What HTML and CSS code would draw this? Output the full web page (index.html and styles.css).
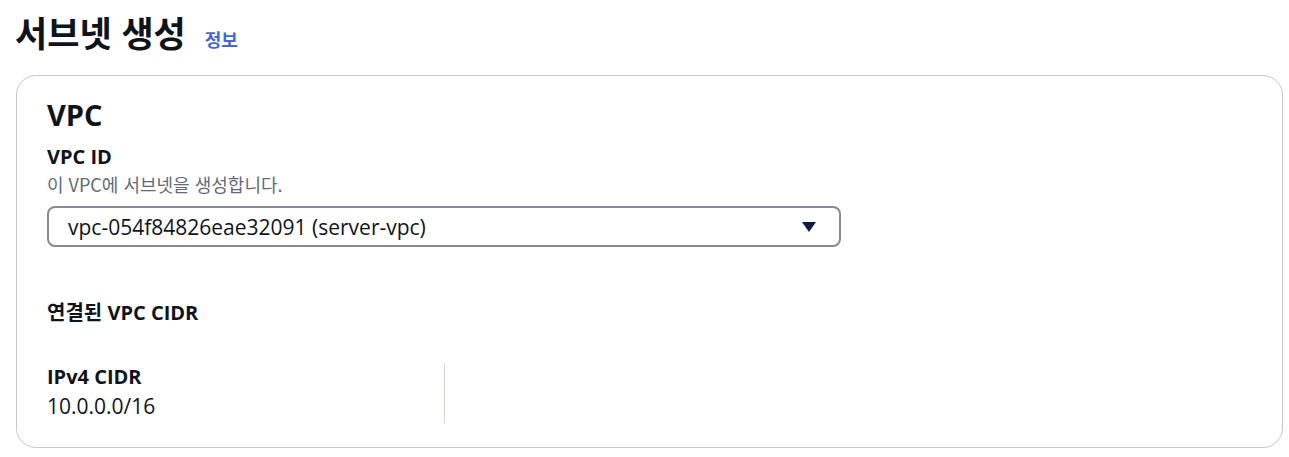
FILE: index.html
```html
<!DOCTYPE html>
<html lang="ko">
<head>
<meta charset="utf-8">
<title>서브넷 생성</title>
<link rel="stylesheet" href="styles.css">
</head>
<body>
<div class="page">
  <header class="page-header">
    <h1 class="page-title">서브넷 생성</h1>
    <a class="info-link" href="#">정보</a>
  </header>
  <section class="card">
    <h2 class="card-title">VPC</h2>
    <div class="field">
      <div class="field-label">VPC ID</div>
      <div class="field-desc">이 VPC에 서브넷을 생성합니다.</div>
      <div class="select">
        <span class="select-value">vpc-054f84826eae32091 (server-vpc)</span>
        <svg class="select-caret" width="16" height="12" viewBox="0 0 16 12"><path d="M1 1 H15 L8 11 Z" fill="#0f1b4c"/></svg>
      </div>
    </div>
    <h3 class="section-title">연결된 VPC CIDR</h3>
    <div class="kv-grid">
      <div class="kv">
        <div class="kv-key">IPv4 CIDR</div>
        <div class="kv-value">10.0.0.0/16</div>
      </div>
      <div class="kv kv-empty"></div>
    </div>
  </section>
</div>
</body>
</html>
```
FILE: styles.css
```css
* { box-sizing: border-box; }
html, body { margin: 0; padding: 0; background: #ffffff; }
body {
  font-family: "Open Sans", "Noto Sans CJK KR", sans-serif;
  color: #0f141a;
}
.page {
  padding: 10px 6px 9px 16px;
}
.page-header {
  display: flex;
  align-items: baseline;
  gap: 19px;
  height: 65px;
}
.page-title {
  margin: 0;
  margin-left: -1px;
  font-family: "Noto Sans CJK KR", sans-serif;
  font-size: 35px;
  font-weight: 700;
  line-height: 44px;
  color: #0f141a;
}
.info-link {
  font-family: "Noto Sans CJK KR", sans-serif;
  font-size: 18px;
  font-weight: 700;
  color: #4468d2;
  text-decoration: none;
}
.card {
  border: 1px solid #c6c6cd;
  border-radius: 20px;
  padding: 19px 30px 22px 30px;
  height: 373px;
}
.card-title {
  margin: 0;
  font-size: 29px;
  font-weight: 700;
  line-height: 40px;
}
.field { margin-top: 8px; }
.field-label {
  font-size: 20px;
  font-weight: 700;
  line-height: 28px;
}
.field-desc {
  font-size: 18px;
  color: #5f6b7a;
  line-height: 26px;
  font-family: "Noto Sans CJK KR", sans-serif;
}
.select {
  margin-top: 9px;
  width: 794px;
  height: 41px;
  border: 2px solid #8a8a92;
  border-radius: 8px;
  display: flex;
  align-items: center;
  justify-content: space-between;
  padding: 0 22px 0 19px;
}
.select-value {
  font-size: 21px;
  line-height: 28px;
}
.select-caret { display: block; }
.section-title {
  margin: 52px 0 0 0;
  font-family: "Open Sans", "Noto Sans CJK KR", sans-serif;
  font-size: 20px;
  font-weight: 700;
  line-height: 28px;
}
.kv-grid {
  margin-top: 36px;
  display: grid;
  grid-template-columns: 397px 1fr;
}
.kv {
  padding: 0 0 5px 0;
}
.kv-empty {
  border-left: 1px solid #d1d5db;
  height: 60px;
}
.kv-key {
  font-size: 20px;
  font-weight: 700;
  line-height: 28px;
}
.kv-value {
  font-size: 21px;
  line-height: 30px;
}
```
